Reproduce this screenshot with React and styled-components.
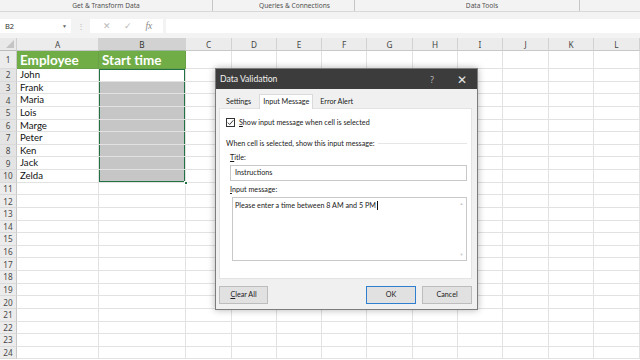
import styled, { createGlobalStyle } from "styled-components";

const GlobalStyle = createGlobalStyle`
  html, body { margin: 0; padding: 0; background: #fff; }
  body { width: 640px; height: 360px; overflow: hidden; }
  * { box-sizing: border-box; }
`;

const COLUMNS = [
  { name: "A", w: 82 },
  { name: "B", w: 87 },
  { name: "C", w: 46 },
  { name: "D", w: 45 },
  { name: "E", w: 45 },
  { name: "F", w: 45 },
  { name: "G", w: 46 },
  { name: "H", w: 45 },
  { name: "I", w: 45 },
  { name: "J", w: 46 },
  { name: "K", w: 45 },
  { name: "L", w: 46 },
];

const NAMES = ["John", "Frank", "Maria", "Lois", "Marge", "Peter", "Ken", "Jack", "Zelda"];

const GROUPS = [
  { label: "Get & Transform Data", w: 213 },
  { label: "Queries & Connections", w: 142, shift: 22 },
  { label: "Data Tools", w: 225, shift: 30 },
  { label: "", w: 60 },
];

const Page = styled.div`
  position: relative;
  width: 640px;
  height: 360px;
  overflow: hidden;
  display: flex;
  flex-direction: column;
  background: #fff;
  font-family: "Noto Sans", "Open Sans", sans-serif;
`;

const RibbonLabels = styled.div`
  height: 12px;
  display: flex;
  background: #f3f3f3;
  border-bottom: 1px solid #d8d8d8;
`;

const Group = styled.div`
  width: ${p => p.$w}px;
  flex: none;
  display: flex;
  justify-content: center;
  padding-left: ${p => p.$shift || 0}px;
  font-size: 6.6px;
  line-height: 11px;
  color: #505050;
  border-right: 1px solid #c6c6c6;
  &:last-child { border-right: none; }
`;

const FormulaBar = styled.div`
  height: 26px;
  display: flex;
  align-items: center;
  background: #f3f3f3;
  padding-top: 1px;
`;

const NameBox = styled.div`
  width: 71px;
  height: 14px;
  background: #fff;
  display: flex;
  align-items: center;
  justify-content: space-between;
  padding: 0 4px 0 5px;
  font-size: 7.5px;
  color: #333;
`;

const Caret = styled.span`
  font-size: 5px;
  color: #666;
`;

const Grip = styled.div`
  width: 19px;
  text-align: center;
  color: #b5b5b5;
  font-size: 8px;
  line-height: 8px;
`;

const FxBox = styled.div`
  width: 73px;
  height: 14px;
  background: #fff;
  display: flex;
  align-items: center;
  justify-content: space-around;
  padding: 0 4px 0 6px;
  color: #b8b8b8;
  font-size: 9px;
`;

const Fx = styled.span`
  font-family: "Liberation Serif", serif;
  font-style: italic;
  color: #8a8a8a;
  font-size: 9.5px;
`;

const FormulaInput = styled.div`
  flex: 1;
  height: 14px;
  margin-left: 3px;
  background: #fff;
`;

const Sheet = styled.div`
  display: grid;
  grid-template-columns: 17px ${COLUMNS.map(c => c.w + "px").join(" ")};
  grid-auto-rows: 12.63px;
  grid-template-rows: 13px 18px;
  font-family: Lato, "Open Sans", sans-serif;
`;

const Corner = styled.div`
  background: #e9e9e9;
  border-right: 1px solid #cfcfcf;
  border-bottom: 1px solid #bdbdbd;
  position: relative;
  &::after {
    content: "";
    position: absolute;
    right: 2px;
    bottom: 2px;
    border-left: 8px solid transparent;
    border-bottom: 8px solid #c4c4c4;
  }
`;

const ColHead = styled.div`
  background: ${p => (p.$sel ? "#d2d2d2" : "#ececec")};
  border-right: 1px solid #d2d2d2;
  border-bottom: 1px solid ${p => (p.$sel ? "#9bb59a" : "#c8c8c8")};
  text-align: center;
  font-family: "Noto Sans", sans-serif;
  font-size: 8.2px;
  line-height: 13px;
  color: ${p => (p.$sel ? "#333" : "#444")};
`;

const RowHead = styled.div`
  background: ${p => (p.$sel ? "#e4e4e4" : "#ececec")};
  border-right: 1px solid #c8c8c8;
  border-bottom: 1px solid #dadada;
  font-family: "Noto Sans", sans-serif;
  font-size: 8.2px;
  color: #4a4a4a;
  display: flex;
  align-items: center;
  justify-content: center;
`;

const Cell = styled.div`
  position: relative;
  border-right: 1px solid ${p => (p.$head ? "#6aa048" : "#e2e2e2")};
  border-bottom: 1px solid ${p => (p.$head ? "#6aa048" : "#e2e2e2")};
  background: ${p => (p.$head ? "#70ad47" : p.$sel ? "#c6c6c6" : "#fff")};
  color: ${p => (p.$head ? "#fff" : "#111")};
  font-weight: ${p => (p.$head ? 700 : 400)};
  font-size: ${p => (p.$head ? "13.5px" : "9.6px")};
  line-height: ${p => (p.$head ? "18px" : "12px")};
  padding-left: 3px;
  white-space: nowrap;
  box-shadow: ${p =>
    p.$frame
      ? [
          "inset 1px 0 0 #217346",
          "inset -1px 0 0 #217346",
          p.$frame.top ? "inset 0 1px 0 #217346" : null,
          p.$frame.bottom ? "inset 0 -1px 0 #217346" : null,
        ]
          .filter(Boolean)
          .join(", ")
      : "none"};
`;

const Handle = styled.span`
  position: absolute;
  right: -3px;
  bottom: -3px;
  width: 4px;
  height: 4px;
  background: #217346;
  border: 1px solid #fff;
  z-index: 2;
`;

/* ---------- dialog ---------- */

const Dialog = styled.div`
  position: absolute;
  left: 215px;
  top: 68px;
  width: 263px;
  height: 242px;
  background: #f0f0f0;
  border: 1px solid #7c7c7c;
  box-shadow: 0 0 7px rgba(0, 0, 0, 0.3);
  display: flex;
  flex-direction: column;
  font-family: Lato, "Noto Sans", sans-serif;
  color: #1a1a1a;
`;

const TitleBar = styled.div`
  height: 20px;
  flex: none;
  background: #3c3c3c;
  color: #f2f2f2;
  display: flex;
  align-items: center;
  padding: 0 0 0 4px;
  font-size: 8.6px;
`;

const Title = styled.span`
  flex: 1;
`;

const TitleButton = styled.span`
  width: 30px;
  text-align: center;
  font-family: "Noto Sans", sans-serif;
  font-size: ${p => (p.$big ? "12px" : "8.5px")};
  color: #e6e6e6;
  font-weight: 300;
`;

const Tabs = styled.div`
  display: flex;
  align-items: flex-end;
  margin: 5px 0 0 5px;
  height: 14px;
`;

const Tab = styled.div`
  height: ${p => (p.$active ? "15px" : "14px")};
  margin-bottom: ${p => (p.$active ? "-1px" : "0")};
  padding: 0 ${p => p.$pad}px;
  background: ${p => (p.$active ? "#fff" : "#f0f0f0")};
  border: 1px solid ${p => (p.$active ? "#dadada" : "transparent")};
  border-bottom: none;
  font-size: 7.2px;
  line-height: 13px;
  color: #222;
  margin-right: ${p => p.$gap}px;
  position: relative;
  z-index: 1;
`;

const Panel = styled.div`
  margin: 0 5px 0 3px;
  height: 171px;
  background: #fff;
  border: 1px solid #e3e3e3;
  padding: 9px 4px 0 6px;
  display: flex;
  flex-direction: column;
`;

const CheckRow = styled.div`
  display: flex;
  align-items: center;
  gap: 4px;
  font-size: 7.2px;
  line-height: 9px;
`;

const Box = styled.span`
  width: 9px;
  height: 9px;
  border: 1px solid #333;
  background: #fff;
  display: flex;
  align-items: center;
  justify-content: center;
`;

const Key = styled.span`
  text-decoration: underline;
  text-underline-offset: 1px;
`;

const Legend = styled.div`
  display: flex;
  align-items: center;
  gap: 3px;
  margin-top: 12px;
  font-size: 7.2px;
  line-height: 9px;
  &::after {
    content: "";
    flex: 1;
    border-top: 1px solid #e6e6e6;
  }
`;

const Field = styled.div`
  padding-left: 4px;
  display: flex;
  flex-direction: column;
`;

const FieldLabel = styled.div`
  font-size: 7.2px;
  line-height: 9px;
  margin-top: ${p => p.$gap}px;
  margin-bottom: 3px;
`;

const Input = styled.div`
  height: 16px;
  border: 1px solid #c8c8c8;
  background: #fff;
  font-size: 7.2px;
  line-height: 14px;
  padding-left: 4px;
`;

const TextArea = styled.div`
  margin-left: 2px;
  height: 64px;
  border: 1px solid #c8c8c8;
  background: #fff;
  display: flex;
`;

const TextBody = styled.div`
  flex: 1;
  font-size: 7.2px;
  line-height: 9px;
  padding: 3px 0 0 2px;
`;

const TextCaret = styled.span`
  display: inline-block;
  width: 1px;
  height: 9px;
  background: #111;
  vertical-align: -2px;
  margin-left: 1px;
`;

const ScrollTrack = styled.div`
  width: 9px;
  display: flex;
  flex-direction: column;
  justify-content: space-between;
  align-items: center;
  padding: 3px 0;
  color: #c7c7c7;
  font-size: 4px;
`;

const ButtonRow = styled.div`
  display: flex;
  align-items: center;
  padding: 7px 5px 0 3px;
  gap: 6px;
`;

const Button = styled.div`
  width: ${p => p.$w || 50}px;
  height: 18px;
  background: #e1e1e1;
  border: 1px solid ${p => (p.$primary ? "#2f7fd0" : "#bdbdbd")};
  font-size: 7.2px;
  line-height: 16px;
  text-align: center;
  color: #222;
  margin-left: ${p => (p.$push ? "auto" : "0")};
`;

function SpreadsheetRow({ r }) {
  const inSel = r >= 2 && r <= 10;
  const isHead = r === 1;
  const name = inSel ? NAMES[r - 2] : "";
  return (
    <>
      <RowHead $sel={inSel}>{r}</RowHead>
      <Cell $head={isHead}>{isHead ? "Employee" : name}</Cell>
      <Cell
        $head={isHead}
        $sel={r >= 3 && r <= 10}
        $frame={inSel ? { top: r === 2, bottom: r === 10 } : null}
      >
        {isHead ? "Start time" : ""}
        {r === 10 && <Handle />}
      </Cell>
      {COLUMNS.slice(2).map(c => (
        <Cell key={c.name} />
      ))}
    </>
  );
}

export default function App() {
  const rows = Array.from({ length: 24 }, (_, i) => i + 1);
  return (
    <Page>
      <GlobalStyle />
      <RibbonLabels>
        {GROUPS.map(g => (
          <Group key={g.label || "x"} $w={g.w} $shift={g.shift}>
            {g.label}
          </Group>
        ))}
      </RibbonLabels>

      <FormulaBar>
        <NameBox>
          B2 <Caret>▼</Caret>
        </NameBox>
        <Grip>⋮</Grip>
        <FxBox>
          <span>✕</span>
          <span>✓</span>
          <Fx>fx</Fx>
        </FxBox>
        <FormulaInput />
      </FormulaBar>

      <Sheet>
        <Corner />
        {COLUMNS.map(c => (
          <ColHead key={c.name} $sel={c.name === "B"}>
            {c.name}
          </ColHead>
        ))}
        {rows.map(r => (
          <SpreadsheetRow key={r} r={r} />
        ))}
      </Sheet>

      <Dialog>
        <TitleBar>
          <Title>Data Validation</Title>
          <TitleButton>?</TitleButton>
          <TitleButton $big>✕</TitleButton>
        </TitleBar>
        <Tabs>
          <Tab $pad={4} $gap={3}>Settings</Tab>
          <Tab $active $pad={3} $gap={1}>Input Message</Tab>
          <Tab $pad={5} $gap={0}>Error Alert</Tab>
        </Tabs>
        <Panel>
          <CheckRow>
            <Box>
              <svg width="7" height="7" viewBox="0 0 7 7">
                <path d="M0.8 3.6 L2.7 5.5 L6.3 1.3" fill="none" stroke="#222" strokeWidth="0.9" />
              </svg>
            </Box>
            <span>
              <Key>S</Key>how input message when cell is selected
            </span>
          </CheckRow>
          <Legend>When cell is selected, show this input message:</Legend>
          <Field>
            <FieldLabel $gap={5}>
              <Key>T</Key>itle:
            </FieldLabel>
            <Input>Instructions</Input>
            <FieldLabel $gap={4}>
              <Key>I</Key>nput message:
            </FieldLabel>
            <TextArea>
              <TextBody>
                Please enter a time between 8 AM and 5 PM
                <TextCaret />
              </TextBody>
              <ScrollTrack>
                <span>▲</span>
                <span>▼</span>
              </ScrollTrack>
            </TextArea>
          </Field>
        </Panel>
        <ButtonRow>
          <Button $w={49}>
            <Key>C</Key>lear All
          </Button>
          <Button $w={50} $primary $push>
            OK
          </Button>
          <Button $w={50}>Cancel</Button>
        </ButtonRow>
      </Dialog>
    </Page>
  );
}
